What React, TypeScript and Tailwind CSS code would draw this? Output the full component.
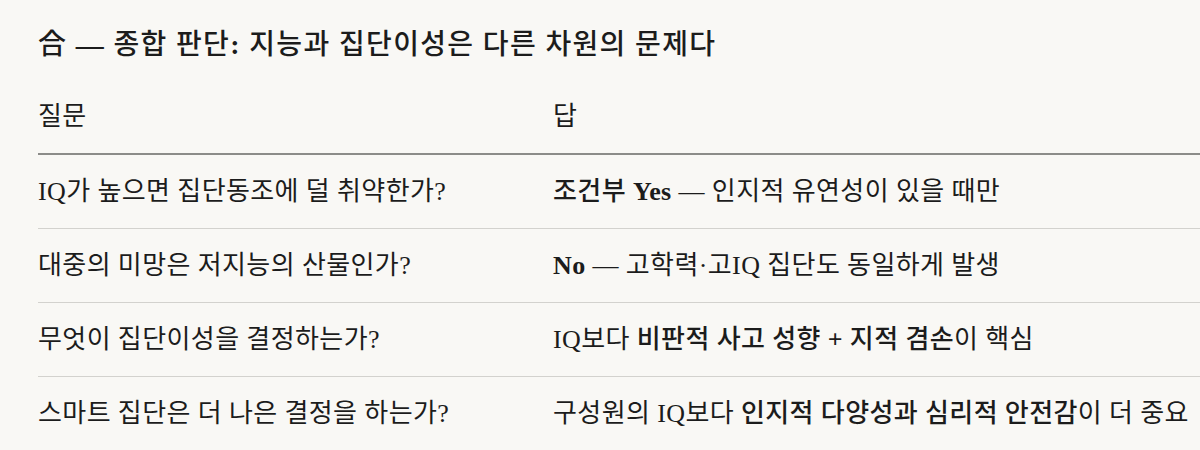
const Em = ({ children }: { children: React.ReactNode }) => (
  <span className="font-medium">{children}</span>
);
const Lb = ({ children }: { children: React.ReactNode }) => (
  <span className="font-bold">{children}</span>
);

const rows: { q: string; a: React.ReactNode }[] = [
  {
    q: "IQ가 높으면 집단동조에 덜 취약한가?",
    a: (
      <>
        <Em>
          조건부 <Lb>Yes</Lb>
        </Em>{" "}
        — 인지적 유연성이 있을 때만
      </>
    ),
  },
  {
    q: "대중의 미망은 저지능의 산물인가?",
    a: (
      <>
        <Lb>No</Lb> — 고학력·고IQ 집단도 동일하게 발생
      </>
    ),
  },
  {
    q: "무엇이 집단이성을 결정하는가?",
    a: (
      <>
        IQ보다{" "}
        <Em>
          비판적 사고 성향 <Lb>+</Lb> 지적 겸손
        </Em>
        이 핵심
      </>
    ),
  },
  {
    q: "스마트 집단은 더 나은 결정을 하는가?",
    a: (
      <>
        구성원의 IQ보다 <Em>인지적 다양성과 심리적 안전감</Em>이 더 중요
      </>
    ),
  },
];

export default function App() {
  return (
    <div
      className="min-h-[450px] w-[1200px] overflow-hidden bg-[#f9f8f5] pl-[38px] pt-[27px] text-[#1c1c1c]"
      style={{ fontFamily: '"Liberation Serif", "Noto Sans CJK KR", serif' }}
    >
      <h2 className="mb-[17px] text-[28px] font-medium leading-[36px] tracking-[1.35px]">
        合 <Lb>—</Lb> 종합 판단<Lb>:</Lb> 지능과 집단이성은 다른 차원의 문제다
      </h2>

      <div className="w-[1162px] text-[26px] tracking-[0.4px]">
        <div className="grid grid-cols-[515px_1fr] border-b-2 border-[#8c8c89] py-[18px] leading-[37px]">
          <div>질문</div>
          <div>답</div>
        </div>
        {rows.map((r) => (
          <div
            key={r.q}
            className="grid grid-cols-[515px_1fr] border-b border-[#d3d2ce] py-[18px] leading-[37px]"
          >
            <div>{r.q}</div>
            <div>{r.a}</div>
          </div>
        ))}
      </div>
    </div>
  );
}
